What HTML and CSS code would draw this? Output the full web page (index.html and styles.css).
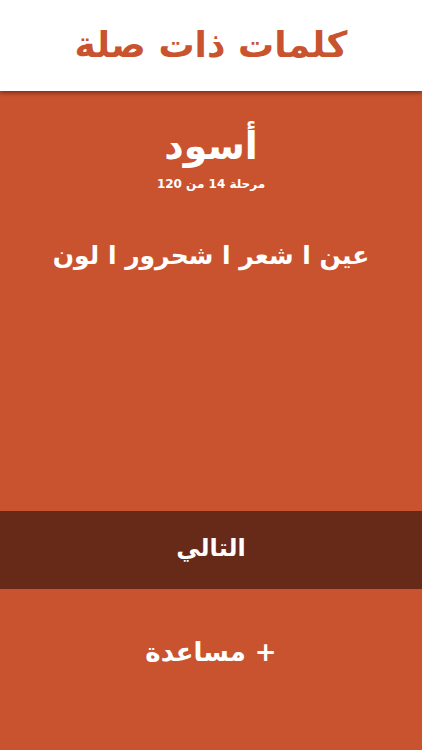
FILE: index.html
```html
<!DOCTYPE html>
<html lang="ar" dir="rtl">
<head>
<meta charset="utf-8">
<link rel="stylesheet" href="styles.css">
</head>
<body>
<div class="app">
  <header class="top">
    <h1 class="title">كلمات ذات صلة</h1>
  </header>
  <main class="board">
    <div class="answer">أسود</div>
    <div class="level">مرحلة 14 من 120</div>
    <div class="clues">عين ا شعر ا شحرور ا لون</div>
  </main>
  <button class="next">التالي</button>
  <div class="help">+ مساعدة</div>
</div>
</body>
</html>
```
FILE: styles.css
```css
html, body {
  margin: 0;
  padding: 0;
  width: 422px;
  height: 750px;
  overflow: hidden;
  background: #c9532f;
}
body {
  font-family: "DejaVu Sans", sans-serif;
}
.app {
  display: flex;
  flex-direction: column;
  height: 750px;
}
.top {
  height: 91px;
  background: #ffffff;
  display: flex;
  align-items: center;
  justify-content: center;
  box-shadow: 0 2px 4px rgba(60, 20, 10, 0.55);
  position: relative;
  z-index: 1;
}
.title {
  margin: 0;
  color: #c9532f;
  font-size: 36px;
  font-weight: bold;
  line-height: 1;
  padding-bottom: 2px;
}
.board {
  height: 420px;
  display: flex;
  flex-direction: column;
  align-items: center;
  color: #ffffff;
  font-weight: bold;
}
.answer {
  margin-top: 33px;
  font-size: 38px;
  line-height: 44px;
}
.level {
  margin-top: 8px;
  font-size: 12px;
  line-height: 16px;
}
.clues {
  margin-top: 46px;
  font-size: 25px;
  line-height: 36px;
}
.next {
  height: 78px;
  border: none;
  margin: 0;
  background: #672a19;
  color: #ffffff;
  font-family: "DejaVu Sans", sans-serif;
  font-size: 24px;
  font-weight: bold;
  display: flex;
  align-items: center;
  justify-content: center;
  padding: 0 0 4px 0;
}
.help {
  margin-top: 45px;
  text-align: center;
  color: #ffffff;
  font-size: 26px;
  font-weight: bold;
  line-height: 36px;
}
```
